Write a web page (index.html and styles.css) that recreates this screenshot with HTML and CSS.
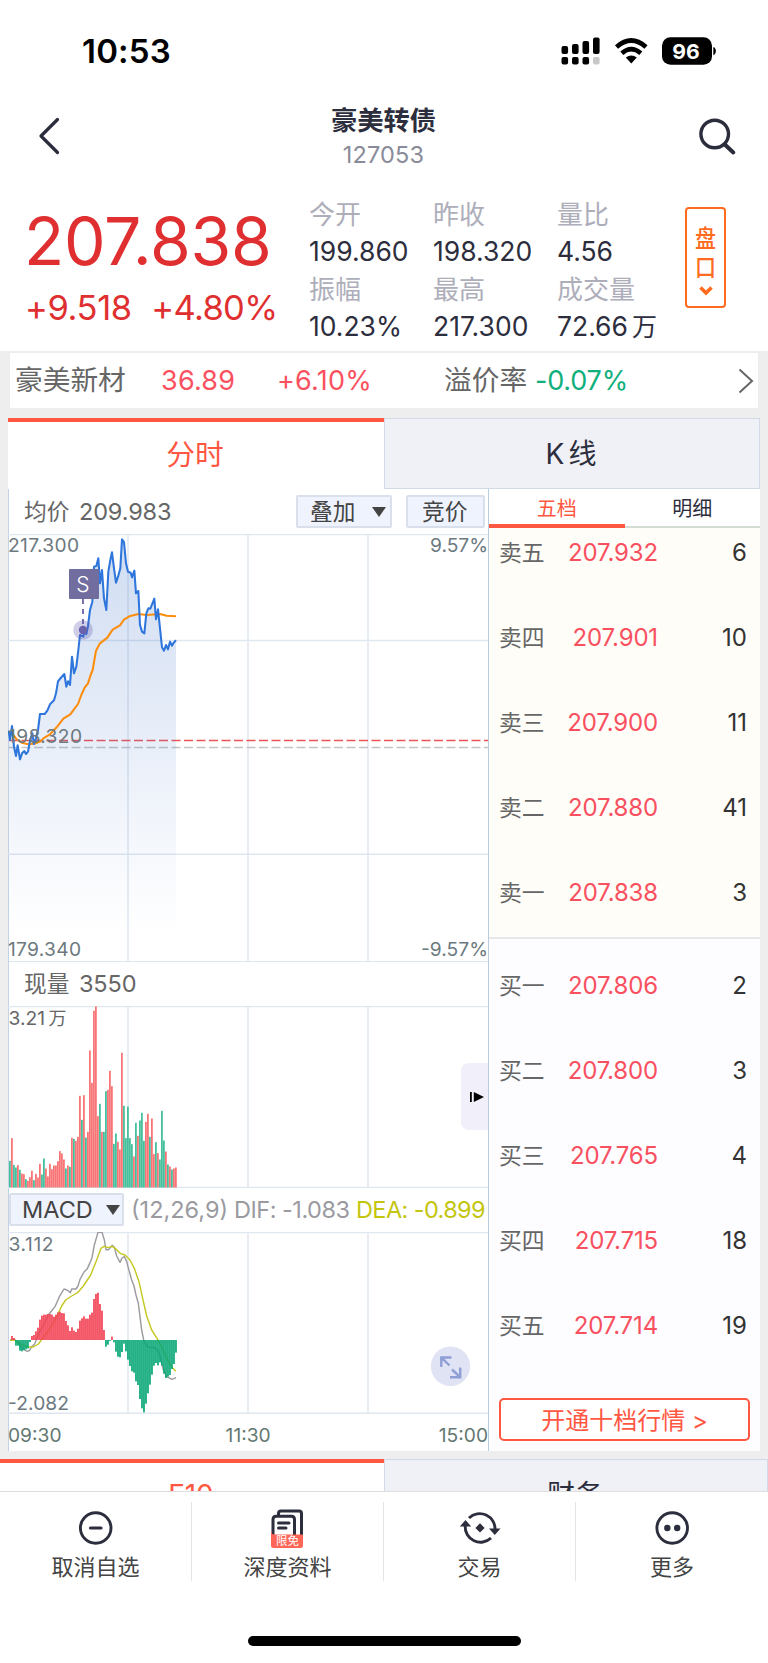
FILE: index.html
```html
<!DOCTYPE html>
<html lang="zh-CN">
<head>
<meta charset="utf-8">
<title>豪美转债 127053</title>
<link rel="stylesheet" href="styles.css">
</head>
<body>
<div class="screen">
  <div class="status">
    <span class="clock">10:53</span>
    <span class="status-icons">
      <svg width="156" height="30" viewBox="561 36 156 30">
        <g fill="#000">
          <rect x="561.5" y="46" width="6.6" height="8" rx="2"/><rect x="572" y="44" width="6.6" height="10" rx="2"/>
          <rect x="582.5" y="41" width="6.6" height="13" rx="2"/><rect x="593" y="37.5" width="6.6" height="16.5" rx="2"/>
          <rect x="561.5" y="57" width="6.6" height="7.5" rx="2"/><rect x="572" y="57" width="6.6" height="7.5" rx="2"/>
          <rect x="582.5" y="57" width="6.6" height="7.5" rx="2"/><rect x="593" y="57" width="6.6" height="7.5" rx="2" fill="#c8c8c8"/>
        </g>
        <path d="M616.5 47Q631.3 34 646 47M621.8 53.3Q631.3 45 640.8 53.3" fill="none" stroke="#000" stroke-width="4.6"/>
        <path d="M625.8 57.6Q631.3 53.6 636.8 57.6L631.3 63.4Z"/>
        <rect x="662" y="37.2" width="50" height="27.6" rx="8.5"/>
        <path d="M713.3 47c3.4 1 3.4 7 0 8.200z"/>
        <text x="672.300" y="58.600" class="battery" textLength="27.500" lengthAdjust="spacingAndGlyphs">96</text>
      </svg>
    </span>
  </div>

  <div class="header">
    <svg class="back" width="24" height="40" viewBox="0 0 24 40"><path d="M20.500 3.500L4 20L20.500 36.500" fill="none" stroke="#2b2c3c" stroke-width="3.200" stroke-linecap="round" stroke-linejoin="round"/></svg>
    <div class="heading"><div class="name">豪美转债</div><div class="code">127053</div></div>
    <svg class="search" width="40" height="40" viewBox="697 116 40 40"><circle cx="714.700" cy="134" r="13.800" fill="none" stroke="#2b2c3c" stroke-width="3.400"/><path d="M724.800 144.500L733.300 152.500" stroke="#2b2c3c" stroke-width="4" stroke-linecap="round"/></svg>
  </div>

  <div class="quote">
    <div class="quote-main">
      <div class="price">207.838</div>
      <div class="change"><span>+9.518</span><span>+4.80%</span></div>
    </div>
    <div class="stats">
      <div><dt>今开</dt><dd>199.860</dd><dt>振幅</dt><dd>10.23%</dd></div>
      <div><dt>昨收</dt><dd>198.320</dd><dt>最高</dt><dd>217.300</dd></div>
      <div><dt>量比</dt><dd>4.56</dd><dt>成交量</dt><dd class="vol">72.66<i>万</i></dd></div>
    </div>
    <div class="handicap"><span>盘</span><span>口</span><svg width="16" height="12" viewBox="0 0 16 12"><path d="M2.500 2.500L8 8L13.500 2.500" fill="none" stroke="#ff6b1e" stroke-width="3.600"/></svg></div>
  </div>

  <div class="main">
    <div class="stock">
      <span class="s-name">豪美新材</span><span class="s-price">36.89</span><span class="s-pct">+6.10%</span>
      <span class="s-label">溢价率</span><span class="s-prem">-0.07%</span>
      <svg class="s-arrow" width="16" height="28" viewBox="0 0 16 28"><path d="M1.500 2.500L14 14L1.500 25.500" fill="none" stroke="#666" stroke-width="2"/></svg>
    </div>

    <div class="tabs"><div class="tab on">分时</div><div class="tab">K<i>线</i></div></div>

    <div class="panel">
      <div class="charts">
        <div class="bar">
          <span class="t1">均价</span><span class="t2 avg">209.983</span>
          <span class="btn overlay">叠加<b></b></span><span class="btn bid">竞价</span>
        </div>
        <svg class="chart" width="480" height="427" viewBox="8 534 480 427">
          <defs><linearGradient id="area" gradientUnits="userSpaceOnUse" x1="0" y1="50" x2="0" y2="1240"><stop offset="0" stop-color="#3a6fc8" stop-opacity=".24"/><stop offset="1" stop-color="#3a6fc8" stop-opacity="0"/></linearGradient></defs>
          <path class="grid" d="M8 534.500H488M8 640.500H488M8 854.200H488M128 534V961M248 534V961M368 534V961"/>
          <path d="M9 740.500H488" stroke="#ec5558" stroke-width="1.700" stroke-dasharray="9 3.500"/>
          <path d="M9 747.500H488" stroke="#c4c4c6" stroke-width="1.500" stroke-dasharray="9 3.500"/>
          <g transform="translate(0 520) scale(.33333)">
            <polygon id="fill" fill="url(#area)"/>
            <polyline id="avg" class="line" stroke="#fd8d0c" stroke-width="6.200"/>
            <polyline id="price" class="line" stroke="#2f76dc" stroke-width="6.200"/>
          </g>
          <path d="M83 599V626" stroke="#6a63a8" stroke-width="1.800" stroke-dasharray="5 5"/>
          <circle cx="83" cy="630" r="9.800" fill="#5b50a8" fill-opacity=".28"/><circle cx="83" cy="630" r="4.200" fill="#6a62ac"/>
          <rect x="69" y="569" width="30" height="30" rx="1" fill="#716d9f"/><text x="83" y="591.500" class="mark">S</text>
          <text class="lab" x="8" y="552.200" textLength="71">217.300</text>
          <text class="lab" x="8" y="742.500" textLength="74">198.320</text>
          <text class="lab" x="8" y="955.500" textLength="73">179.340</text>
          <text class="lab end" x="488" y="552.200" textLength="58">9.57%</text>
          <text class="lab end" x="488" y="955.500" textLength="67">-9.57%</text>
        </svg>
        <div class="bar line-top"><span class="t1">现量</span><span class="t2">3550</span></div>
        <svg class="chart" width="480" height="182" viewBox="8 1005.500 480 182">
          <path class="grid" d="M8 1006H488M8 1187H488M128 1006V1187M248 1006V1187M368 1006V1187"/>
          <g id="volume" transform="translate(0 960) scale(.33333)"></g>
          <text class="lab dark" x="8.500" y="1024.700">3.21</text><text class="lab dark wan" x="48.500" y="1024.700">万</text>
        </svg>
        <div class="bar macd">
          <span class="btn sel">MACD<b></b></span>
          <span class="m1">(12,26,9)</span><span class="m2">DIF: -1.083</span><span class="m3">DEA: -0.899</span>
        </div>
        <svg class="chart" width="480" height="182" viewBox="8 1232 480 182">
          <path class="grid thin" d="M8 1232.500H488M8 1413.300H488M128 1232V1413M248 1232V1413M368 1232V1413"/>
          <g transform="translate(0 1180) scale(.33333)">
            <polyline id="dif" class="line" stroke="#9c9ca0" stroke-width="4.300"/>
            <polyline id="dea" class="line" stroke="#c5c823" stroke-width="4.300"/>
            <g id="hist" fill-opacity=".88"></g>
          </g>
          <text class="lab" x="8.500" y="1251.300" textLength="45">3.112</text>
          <text class="lab" x="8" y="1410" textLength="61">-2.082</text>
          <circle cx="450.500" cy="1366.300" r="19.700" fill="#e0e3f4"/>
          <path d="M441.300 1367V1357.500H451.500M442 1358.200L449.500 1365.500M460.200 1367.500V1377.300H450M459.500 1376.500L452 1369.500" fill="none" stroke="#8f9fd6" stroke-width="2.400"/>
        </svg>
        <div class="axis"><span>09:30</span><span>11:30</span><span>15:00</span></div>
        <div class="drawer"><svg width="14" height="10" viewBox="0 0 14 10"><path d="M0 0h1.800v10H0zM3.800 0L14 5L3.800 10z"/></svg></div>
      </div>

      <div class="book">
        <div class="book-tabs"><span class="on">五档</span><span>明细</span></div>
        <div class="side sell">
          <div class="row"><span>卖五</span><b>207.932</b><em>6</em></div>
          <div class="row"><span>卖四</span><b>207.901</b><em>10</em></div>
          <div class="row"><span>卖三</span><b>207.900</b><em>11</em></div>
          <div class="row"><span>卖二</span><b>207.880</b><em>41</em></div>
          <div class="row"><span>卖一</span><b>207.838</b><em>3</em></div>
        </div>
        <div class="side buy">
          <div class="row"><span>买一</span><b>207.806</b><em>2</em></div>
          <div class="row"><span>买二</span><b>207.800</b><em>3</em></div>
          <div class="row"><span>买三</span><b>207.765</b><em>4</em></div>
          <div class="row"><span>买四</span><b>207.715</b><em>18</em></div>
          <div class="row"><span>买五</span><b>207.714</b><em>19</em></div>
          <div class="open">开通十档行情&nbsp;<i>&gt;</i></div>
        </div>
      </div>
    </div>

    <div class="tabs lower"><div class="tab on">F10</div><div class="tab">财务</div></div>
  </div>

  <div class="nav">
    <div class="item">
      <svg width="44" height="44" viewBox="74 1506 44 44"><g fill="none" stroke="#2d2e3d"><circle cx="95.700" cy="1528" r="15.300" stroke-width="2.900"/><path d="M90.500 1528H101" stroke-width="3.200" stroke-linecap="round"/></g></svg>
      <span>取消自选</span></div>
    <div class="item">
      <svg width="44" height="44" viewBox="266 1506 44 44"><g fill="none" stroke="#2d2e3d" stroke-width="3"><path d="M278.500 1515V1513.500Q278.500 1511 281 1511H299Q301.500 1511 301.500 1513.500V1538"/><path d="M273 1538V1519.500Q273 1516.300 276 1516.300H291.500Q294.500 1516.300 294.500 1519.500V1538"/><path d="M278.500 1523H289M278.500 1528H286" stroke-linecap="round"/></g><path d="M271 1531Q271.300 1534.500 274.500 1534.500H303V1545.500Q303 1548 300.500 1548H273.500Q271 1548 271 1545.500Z" fill="#ff6658"/><text x="276" y="1545.300" class="free">限免</text></svg>
      <span>深度资料</span></div>
    <div class="item">
      <svg width="44" height="44" viewBox="458 1506 44 44"><g fill="none" stroke="#2d2e3d" stroke-width="2.900"><path d="M469 1518A15.300 15.300 0 0 1 495 1530"/><path d="M491 1538A15.300 15.300 0 0 1 465.200 1526"/></g><g fill="#2d2e3d"><path d="M489 1528.500H500.500L494.800 1535Z"/><path d="M459.800 1526.500H471.200L465.500 1520Z"/><path d="M480 1523.200L484.600 1527.900L480 1532.600L475.400 1527.900Z"/></g></svg>
      <span>交易</span></div>
    <div class="item">
      <svg width="44" height="44" viewBox="650 1506 44 44"><circle cx="672.200" cy="1528" r="15.300" fill="none" stroke="#2d2e3d" stroke-width="2.900"/><circle cx="667.300" cy="1528" r="3.200" fill="#2d2e3d"/><circle cx="677.200" cy="1528" r="3.200" fill="#2d2e3d"/></svg>
      <span>更多</span></div>
  </div>
  <div class="home"></div>
</div>
<script src="chart.js"></script>
</body>
</html>
```
FILE: styles.css
```css
* { box-sizing: border-box; margin: 0; padding: 0; }
body { background: #fff; font-family: Inter, "Noto Sans CJK SC", sans-serif; color: #2d2e3d; }
i, em { font-style: normal; }
b { font-weight: 400; }
svg { display: block; flex: none; }
.screen { width: 768px; height: 1663px; overflow: hidden; display: flex; flex-direction: column; }

.status { height: 84px; display: flex; justify-content: space-between; padding: 36px 51px 0 82px; }
.clock { font-size: 33px; font-weight: 600; line-height: 31px; color: #000; letter-spacing: .2px; }
.battery { font-size: 20.5px; font-weight: 700; fill: #fff; }

.header { height: 98px; display: flex; justify-content: space-between; padding: 20px 31px 0 37px; }
.back { margin-top: 12px; }
.search { margin-top: 12px; }
.heading { text-align: center; margin-left: 9px; }
.name { font-size: 26.3px; line-height: 33px; height: 31px; font-weight: 600; }
.code { font-size: 23.5px; line-height: 39px; color: #8a8b99; letter-spacing: .2px; }

.quote { height: 169px; display: flex; }
.quote-main { width: 309px; padding: 23.500px 0 0 24px; color: #e02f30; white-space: nowrap; }
.price { font-size: 66px; line-height: 70px; letter-spacing: -.3px; }
.change { font-size: 34.500px; line-height: 64px; display: flex; gap: 19.500px; letter-spacing: -.4px; padding-left: 1px; }
.change span:last-child { letter-spacing: -.65px; }
.stats { display: flex; padding-top: 13.500px; width: 376px; }
.stats > div { width: 124px; white-space: nowrap; }
.stats dt { font-size: 26px; line-height: 37.500px; color: #aeaebb; }
.stats dd { font-size: 26.500px; line-height: 37.500px; color: #2d2e3d; }
.stats i { margin-left: 4px; font-size: 25px; }
.handicap { width: 41px; height: 101px; margin-top: 25px; border: 2px solid #ff6b1e; border-radius: 4px; color: #ff6b1e; display: flex; flex-direction: column; align-items: center; padding-top: 15px; }
.handicap span { font-size: 21px; line-height: 29px; font-weight: 500; transform: scaleY(1.15); }
.handicap svg { margin-top: 3px; }

.main { height: 1140px; background: #eee; padding-top: 2px; overflow: hidden; flex: none; }
.stock { margin: 0 10px; height: 55px; background: #fff; display: flex; line-height: 55px; font-size: 27px; padding-left: 5px; white-space: nowrap; }
.s-name { width: 146px; font-size: 27.700px; color: #666; }
.s-price { width: 116px; color: #fa5160; letter-spacing: .2px; }
.s-pct { width: 167px; color: #fa5160; letter-spacing: .2px; }
.s-label { width: 91px; font-size: 27.700px; color: #666; }
.s-prem { width: 202.500px; color: #0fb07c; letter-spacing: -.2px; }
.s-arrow { margin-top: 13.500px; }

.tabs { margin: 10px 8px 0; height: 71px; display: flex; }
.tab { width: 376px; height: 71px; background: #f0f1f7; border: 1.500px solid #d3dae7; font-size: 28px; line-height: 70px; text-align: center; padding-right: 2px; }
.tab i { margin-left: 4px; }
.tab.on { background: #fff; border: 0; border-top: 4px solid #ff5742; color: #ff5742; line-height: 65px; font-size: 28.800px; }
.tabs.lower { margin: 8px 0 0; }
.tabs.lower .tab { width: 384px; }
.tabs.lower .on { line-height: 64px; font-size: 28px; }

.panel { margin: 0 8px; height: 962px; display: flex; background: #fff; }
.charts { width: 481px; border-left: 1px solid #c3d3e5; border-right: 1px solid #b9cddd; position: relative; }
.charts .chart { margin-left: -1px; }
.bar { height: 45px; display: flex; align-items: center; font-size: 23.500px; line-height: 44px; color: #666; padding-left: 15px; white-space: nowrap; }
.bar.line-top { border-top: 1.500px solid #dde5ee; height: 44.500px; }
.t1 { width: 55px; font-size: 22.700px; }
.avg { width: 217px; }
.t2 { letter-spacing: -.15px; }
.btn { height: 33px; border: 2px solid #d9dfeb; border-radius: 2px; background: #eff3fe; color: #444; font-size: 22.700px; line-height: 29px; display: flex; align-items: center; }
.btn b { border: 7px solid transparent; border-top: 10px solid #444; border-bottom: 0; }
.overlay { width: 96px; padding-left: 12px; gap: 17px; margin-right: 14px; }
.bid { width: 79px; padding-left: 14px; }
.bar.macd { padding-left: 0; height: 44.500px; line-height: 45px; }
.sel { width: 115px; padding-left: 11px; gap: 13px; margin-right: 7px; font-size: 23.500px; }
.m1 { width: 103px; color: #9a9a9f; }
.m2 { width: 122px; color: #9a9a9f; letter-spacing: -.5px; }
.m3 { color: #c3c50f; letter-spacing: -.6px; }
.grid { fill: none; stroke: #dfe7f0; stroke-width: 1.500; }
.line { fill: none; stroke-linejoin: round; }
.lab { font-size: 19.200px; fill: #6c797f; }
.end { text-anchor: end; }
.dark { fill: #666; }
.wan { font-size: 18px; }
.mark { font-size: 21px; fill: #fff; text-anchor: middle; font-weight: 300; }
.axis { height: 38px; display: flex; justify-content: space-between; font-size: 19.200px; line-height: 42px; color: #637872; margin-left: -1px; }
.axis span:nth-child(2) { margin-right: 4px; }
.drawer { position: absolute; right: 0; top: 574px; width: 27px; height: 67px; background: #f0effa; border-radius: 8px 0 0 8px; padding: 29px 0 0 9px; }

.book { width: 271px; }
.book-tabs { height: 39px; display: flex; font-size: 20px; line-height: 41px; text-align: center; border-bottom: 2px solid #d5dcd4; }
.book-tabs span { flex: 1; height: 39px; }
.book-tabs .on { color: #ff5742; border-bottom: 4px solid #ff5742; }
.side { display: flex; flex-direction: column; }
.sell { height: 411px; background: #fffdf8; border-bottom: 2px solid #e7e7e9; padding-top: 2px; }
.buy { height: 512px; background: #fdfcff; padding-top: 24px; }
.row { height: 85px; flex: none; display: flex; padding: 0 13px 0 10px; line-height: 46px; font-size: 24px; }
.row span { width: 60px; font-size: 22.800px; color: #666; }
.row b { width: 99px; text-align: right; color: #f8505f; letter-spacing: -.15px; }
.row em { flex: 1; text-align: right; color: #333; }
.open { margin: 10px 10px 0; height: 43px; flex: none; border: 2px solid #ff5742; border-radius: 5px; background: #fff; color: #ff5742; text-align: center; font-size: 24px; line-height: 41px; }

.nav { height: 108px; border-top: 1.500px solid #dedede; display: flex; padding-top: 10px; background: #fff; flex: none; }
.item { width: 192px; height: 79px; display: flex; flex-direction: column; align-items: center; border-right: 1.500px solid #e4e4e4; padding-top: 3.500px; font-size: 22px; line-height: 34px; color: #444; }
.item:last-child { border: 0; }
.free { font-size: 11.500px; fill: #fff; }
.home { width: 273px; height: 10px; margin: 37px 0 0 247.500px; border-radius: 5px; background: #000; }
```
FILE: chart.js
```js
const NS = "http://www.w3.org/2000/svg";

const price = "26,632 30,660 36,618 42,680 48,708 53,676 60,718 66,700 73,693 78,702 84,695 90,662 97,640 102,672 108,655 114,630 120,582 134,582 142,572 150,553 162,541 168,520 174,484 182,474 193,462 199,500 204,484 210,495 216,410 222,460 229,440 235,390 240,345 250,350 254,330 259,342 264,318 270,270 277,245 282,140 289,138 295,115 300,190 306,150 312,235 319,270 325,155 331,120 336,97 342,145 348,188 354,170 361,145 366,58 372,66 378,130 384,155 392,158 396,172 403,152 408,220 415,213 420,315 426,335 433,340 439,280 445,265 451,266 463,236 468,298 474,268 480,325 486,382 492,392 498,375 504,388 510,365 516,377 521,368 528,361";
const avg = "26,640 40,645 50,658 65,668 82,672 105,671 122,664 130,655 150,643 170,622 190,596 211,583 222,568 234,552 244,525 254,503 264,490 272,465 278,450 288,392 300,370 322,353 338,329 360,316 372,299 388,289 415,282 440,285 480,282 500,287 528,289";
const dif = "30,480 45,480 58,493 70,508 82,514 88,512 95,500 104,492 116,462 130,435 145,405 165,380 178,350 192,327 203,331 211,338 215,327 228,327 234,318 240,298 252,276 262,266 270,248 276,233 283,195 294,157 306,157 313,180 318,209 325,209 337,196 343,202 350,228 360,247 366,234 373,230 380,245 388,275 395,300 402,318 408,345 415,370 420,410 425,450 432,485 442,500 452,503 462,502 475,514 483,540 490,570 500,590 516,598 528,593";
const dea = "30,480 45,481 60,490 80,500 100,501 115,492 130,472 150,445 170,410 185,378 197,360 215,348 234,337 250,318 272,285 290,240 303,205 312,199 325,203 337,199 350,209 362,221 375,225 390,240 403,265 417,305 428,355 440,408 455,450 473,478 485,500 500,535 515,562 528,574";

const volume = "g601 r533 g613 g621 r614 g628 r639 r641 g656 r661 r650 r631 g659 r640 r651 r610 g642 g594 r624 r648 r610 r626 r615 r615 r602 r572 r579 r597 g624 r615 g619 r532 g535 r541 r529 r406 g478 r404 g531 r514 r270 r367 r151 r138 r467 g430 r514 g514 g392 r388 r331 r377 g550 g519 r544 r567 r277 g436 g533 g438 g533 g551 r588 g487 r526 g480 g457 g541 r484 r460 g529 r474 r581 g545 r578 g597 g451 g540 r573 g612 r618 g627 r624 r621";
const hist = "480 468 474 497 497 512 514 510 508 505 486 468 465 454 443 419 407 404 404 402 402 404 410 404 397 395 399 400 423 436 453 442 452 456 446 422 415 409 416 416 404 398 357 342 338 372 392 450 500 494 483 470 487 515 530 532 516 491 514 539 558 574 578 604 615 657 685 697 671 640 614 584 557 549 556 547 557 581 594 590 585 567 552 518";

function bar(parent, i, y1, y2, color, width) {
  const r = document.createElementNS(NS, "rect");
  r.setAttribute("x", 27 + i * 6);
  r.setAttribute("y", Math.min(y1, y2));
  r.setAttribute("width", width);
  r.setAttribute("height", Math.abs(y1 - y2));
  r.setAttribute("fill", color);
  parent.appendChild(r);
}

const set = (id, points) => document.getElementById(id).setAttribute("points", points);
set("price", price);
set("avg", avg);
set("fill", price + " 528,1240 26,1240");
set("dif", dif);
set("dea", dea);

const vol = document.getElementById("volume");
volume.split(" ").forEach((v, i) => bar(vol, i, +v.slice(1), 681, v[0] === "r" ? "#f87577" : "#45bf9c", 5.4));

const macd = document.getElementById("hist");
hist.split(" ").forEach((v, i) => bar(macd, i, +v, 480, +v < 480 ? "#f24052" : "#05a674", 5.8));
```
